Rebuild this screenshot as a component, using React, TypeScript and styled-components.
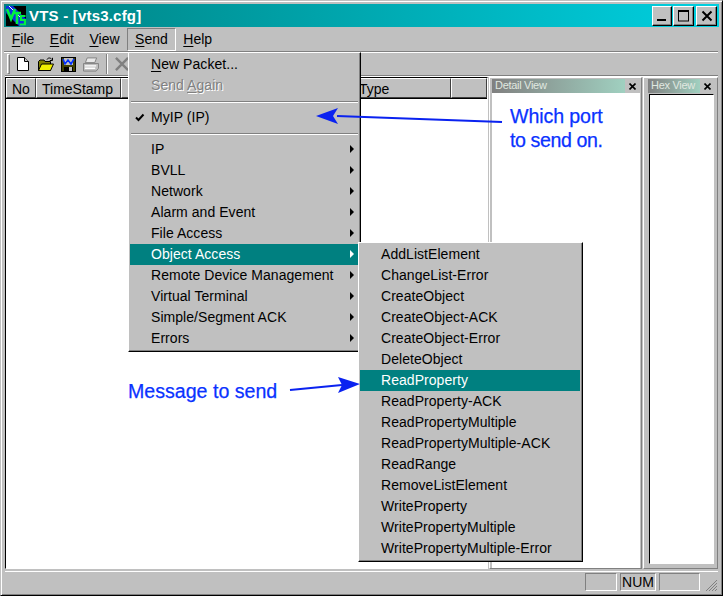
import React from 'react';
import styled, {createGlobalStyle} from 'styled-components';

const Global = createGlobalStyle`
  html, body {
    margin: 0;
    padding: 0;
    background: #c0c0c0;
  }
  * {
    box-sizing: border-box;
  }
`

const Win = styled.div`
  position: relative;
  width: 723px;
  height: 596px;
  padding: 3px 4px 3px;
  display: flex;
  flex-direction: column;
  overflow: hidden;
  background: #c0c0c0;
  border: 1px solid;
  border-color: #c0c0c0 #000 #000 #c0c0c0;
  box-shadow: inset 1px 1px 0 #fff, inset -1px -1px 0 #808080;
  font-family: "Liberation Sans", Arial, sans-serif;
  font-size: 14px;
  color: #000;
`

const TitleBar = styled.div`
  flex: none;
  height: 23px;
  margin: 0 0 0 -1px;
  width: 715px;
  padding: 0 2px 0 2px;
  display: flex;
  align-items: center;
  background: linear-gradient(90deg, #008080 0%, #00d0e0 100%);
`

const TitleText = styled.span`
  margin-left: 3px;
  flex: 1;
  color: #fff;
  font-weight: bold;
  font-size: 15px;
  letter-spacing: 0.2px;
`

const CapButton = styled.button<{ w: number; gap?: number }>`
  width: ${props => props.w}px;
  height: 20px;
  margin-left: ${props => props.gap || 0}px;
  padding: 0;
  display: flex;
  align-items: center;
  justify-content: center;
  background: #c0c0c0;
  border: 1px solid;
  border-color: #fff #000 #000 #fff;
  box-shadow: inset -1px -1px 0 #808080;
`

const MenuBar = styled.div`
  flex: none;
  height: 25px;
  margin-left: -1px;
  display: flex;
  align-items: center;
  border-bottom: 1px solid #808080;
  box-shadow: 0 1px 0 #fff;
`

const MenuTitle = styled.div<{ open?: boolean }>`
  height: 23px;
  padding: 0 6.75px;
  display: flex;
  align-items: center;
  border: 1px solid transparent;
  border-color: ${props => props.open ? '#808080 #fff #fff #808080' : 'transparent'};
`

const Key = styled.span`
  text-decoration: underline;
  text-underline-offset: 2px;
`

const ToolBar = styled.div`
  flex: none;
  height: 24px;
  padding: 1px 0 0 2px;
  display: flex;
  align-items: center;
  gap: 7px;
  border-bottom: 1px solid #808080;
  box-shadow: 0 1px 0 #fff;
`

const Grip = styled.div`
  width: 3px;
  height: 20px;
  border: 1px solid;
  border-color: #fff #808080 #808080 #fff;
`

const ToolIcon = styled.svg<{ after?: number }>`
  flex: none;
  display: block;
  margin-right: ${props => props.after || 0}px;
`

const ToolSep = styled.div`
  width: 2px;
  height: 20px;
  border-left: 1px solid #808080;
  border-right: 1px solid #fff;
`

const Panes = styled.div`
  flex: 1;
  min-height: 0;
  margin-top: 1px;
  display: flex;
`

const ListPane = styled.div`
  width: 484px;
  display: flex;
  flex-direction: column;
  border-top: 1px solid #000;
  border-left: 1px solid #000;
  border-right: 1px solid #fff;
  border-bottom: 1px solid #fff;
  background: #fff;
`

const HeaderRow = styled.div`
  flex: none;
  height: 21px;
  display: flex;
  background: #c0c0c0;
  border-bottom: 1px solid #000;
`

const HeaderCell = styled.div<{ w: number; grow?: boolean }>`
  width: ${props => props.w}px;
  flex: ${props => props.grow ? 1 : 'none'};
  padding: 2px 0 0 5px;
  border: 1px solid;
  border-color: #fff #404040 #404040 #fff;
`

const Splitter = styled.div`
  width: 1px;
  flex: none;
`

const DockPane = styled.div<{ w: number; left: number; right: number }>`
  width: ${props => props.w}px;
  flex: none;
  padding: 1px ${props => props.right}px 0 ${props => props.left}px;
  display: flex;
  flex-direction: column;
  border: 1px solid;
  border-color: #fff #808080 #808080 #fff;
`

const DockHead = styled.div`
  flex: none;
  height: 14px;
  display: flex;
  align-items: center;
  font-size: 11px;
  letter-spacing: -0.3px;
`

const DockTitle = styled.div<{ w: number }>`
  width: ${props => props.w}px;
  height: 14px;
  padding-left: 3px;
  line-height: 13px;
  color: #e0e8e0;
  background: linear-gradient(90deg, #808080 0%, #a0d0c0 100%);
`

const DockClose = styled.span`
  flex: 1;
  display: flex;
  justify-content: center;
  align-items: center;
`

const DetailBody = styled.div`
  flex: 1;
  background: #fff;
`

const HexBody = styled.div`
  flex: 1;
  margin: 1px 0 4px 1px;
  background: #fff;
  border: 1px solid;
  border-color: #000 #fff #fff #000;
`

const StatusBar = styled.div`
  flex: none;
  height: 21px;
  margin-top: 2px;
  display: flex;
  justify-content: flex-end;
  align-items: flex-end;
  gap: 3px;
  padding: 0 18px 1px 0;
  border-top: 1px solid #fff;
  position: relative;
`

const StatusCell = styled.div<{ w: number }>`
  width: ${props => props.w}px;
  height: 18px;
  line-height: 16px;
  text-align: center;
  border: 1px solid;
  border-color: #808080 #fff #fff #808080;
`

const SizeGrip = styled.svg`
  position: absolute;
  right: 0;
  bottom: 0;
`

const PopMenu = styled.div<{ x: number; y: number; w: number }>`
  position: absolute;
  left: ${props => props.x}px;
  top: ${props => props.y}px;
  width: ${props => props.w}px;
  padding: 1px 2px 2px 1px;
  background: #c0c0c0;
  border: 1px solid;
  border-color: #fff #000 #000 #fff;
  box-shadow: inset -1px -1px 0 #808080;
`

const Item = styled.div<{ active?: boolean; off?: boolean }>`
  position: relative;
  height: 21px;
  line-height: 20px;
  padding-left: 21px;
  white-space: nowrap;
  letter-spacing: 0.05px;
  color: ${props => props.active ? '#fff' : props.off ? '#808080' : '#000'};
  background: ${props => props.active ? '#008080' : 'transparent'};
  text-shadow: ${props => props.off ? '1px 1px 0 #fff' : 'none'};
`

const Chevron = styled.i<{ active?: boolean }>`
  position: absolute;
  right: 4px;
  top: 6px;
  border-left: 4px solid ${props => props.active ? '#fff' : '#000'};
  border-top: 4px solid transparent;
  border-bottom: 4px solid transparent;
`

const Tick = styled.svg`
  position: absolute;
  left: 5px;
  top: 6px;
`

const MenuSep = styled.div`
  height: 2px;
  margin: 5px 0 4px 1px;
  border-top: 1px solid #808080;
  border-bottom: 1px solid #fff;
`

const Note = styled.div<{ x: number; y: number; tight?: number }>`
  position: absolute;
  left: ${props => props.x}px;
  top: ${props => props.y}px;
  font-size: 19.6px;
  line-height: 25px;
  letter-spacing: ${props => props.tight || 0}px;
  color: #0a32ff;
  -webkit-text-stroke: 0.25px #0a32ff;
  white-space: nowrap;
`

const Arrows = styled.svg`
  position: absolute;
  left: -1px;
  top: -1px;
  pointer-events: none;
`

const sendGroups = ['IP', 'BVLL', 'Network', 'Alarm and Event', 'File Access', 'Object Access',
    'Remote Device Management', 'Virtual Terminal', 'Simple/Segment ACK', 'Errors']

const objectItems = ['AddListElement', 'ChangeList-Error', 'CreateObject', 'CreateObject-ACK',
    'CreateObject-Error', 'DeleteObject', 'ReadProperty', 'ReadProperty-ACK', 'ReadPropertyMultiple',
    'ReadPropertyMultiple-ACK', 'ReadRange', 'RemoveListElement', 'WriteProperty',
    'WritePropertyMultiple', 'WritePropertyMultiple-Error']

const AppIcon = () => (
    <ToolIcon width="20" height="20" viewBox="0 0 20 20">
        <rect width="20" height="20" fill="#000"/>
        <path d="M0 0 H7 L20 13 V20 H13 L0 7Z" fill="#1030e0"/>
        <path d="M3 0 L20 17" stroke="#fff" strokeWidth="1"/>
        <path d="M1 3 L5 13 L9 3" fill="none" stroke="#00f040" strokeWidth="2.6"/>
        <path d="M7 7 H15 M11 7 V18" fill="none" stroke="#00f040" strokeWidth="2.6"/>
        <path d="M19.5 10 H15 V14 H19 V18.5 H13.5" fill="none" stroke="#00f040" strokeWidth="2.2"/>
    </ToolIcon>
)

const NewIcon = () => (
    <ToolIcon width="12" height="14" viewBox="0 0 12 14" after={2}>
        <path d="M.5.5 H7.5 L11.5 4.5 V13.5 H.5Z" fill="#fff" stroke="#000"/>
        <path d="M7.5.5 V4.5 H11.5" fill="#c0c0c0" stroke="#000"/>
    </ToolIcon>
)

const OpenIcon = () => (
    <ToolIcon width="16" height="14" viewBox="0 0 16 14">
        <path d="M.5 4.5 L2 3 H6 L7 4.5 H12.5 V13.5 H.5Z" fill="#808000" stroke="#000"/>
        <path d="M.5 13.5 L3.5 7 H15.5 L12.5 13.5Z" fill="#f0f000" stroke="#000"/>
        <path d="M9 2.5 C10 .5 12.5 .5 14 2.5 M14.5 .8 V3.5 H11.8" fill="none" stroke="#000"/>
    </ToolIcon>
)

const SaveIcon = () => (
    <ToolIcon width="15" height="15" viewBox="0 0 15 15">
        <rect x=".5" y=".5" width="14" height="14" fill="#404000" stroke="#000"/>
        <rect x="3" y="1" width="9" height="7" fill="#c0c0c0"/>
        <path d="M2 2 L4 7 L7 3 L10 7 L13 2" fill="none" stroke="#0030ff" strokeWidth="1.6"/>
        <rect x="3" y="10" width="9" height="4" fill="#000"/>
        <rect x="8" y="10" width="3" height="4" fill="#c0c0c0"/>
    </ToolIcon>
)

const PrintIcon = () => (
    <ToolIcon width="16" height="15" viewBox="0 0 17 15">
        <path d="M4.5.5 H14.5 L12.5 5.5 H2.5Z" fill="#e8e8e8" stroke="#808080"/>
        <path d="M.5 6.5 H16.5 V11.5 L14 14.5 H.5Z" fill="#c0c0c0" stroke="#808080"/>
        <path d="M2 9 H14 M2 11.5 H13" stroke="#fff" strokeWidth="1.5"/>
    </ToolIcon>
)

const CutIcon = () => (
    <ToolIcon width="14" height="14" viewBox="0 0 15 15">
        <path d="M1 1 L14 14 M14 1 L1 14" stroke="#808080" strokeWidth="2.6"/>
    </ToolIcon>
)

const MiniX = () => (
    <svg width="7" height="7" viewBox="0 0 7 7">
        <path d="M.5 .5 L6.5 6.5 M6.5 .5 L.5 6.5" stroke="#000" strokeWidth="1.6"/>
    </svg>
)

const App = () => {
    return (
        <Win>
            <Global/>
            <TitleBar>
                <AppIcon/>
                <TitleText>VTS - [vts3.cfg]</TitleText>
                <CapButton w={20}>
                    <svg width="12" height="12" viewBox="0 0 12 12"><rect x="1" y="9" width="9" height="2"/></svg>
                </CapButton>
                <CapButton w={21} gap={1}>
                    <svg width="12" height="12" viewBox="0 0 12 12">
                        <rect x=".5" y="1" width="10" height="10" fill="none" stroke="#000"/>
                        <rect x="0" y="0" width="11" height="2"/>
                    </svg>
                </CapButton>
                <CapButton w={21} gap={2}>
                    <svg width="12" height="12" viewBox="0 0 12 12">
                        <path d="M1.5 1.5 L10.5 10.5 M10.5 1.5 L1.5 10.5" stroke="#000" strokeWidth="2"/>
                    </svg>
                </CapButton>
            </TitleBar>
            <MenuBar>
                <MenuTitle><span><Key>F</Key>ile</span></MenuTitle>
                <MenuTitle><span><Key>E</Key>dit</span></MenuTitle>
                <MenuTitle><span><Key>V</Key>iew</span></MenuTitle>
                <MenuTitle open><span><Key>S</Key>end</span></MenuTitle>
                <MenuTitle><span><Key>H</Key>elp</span></MenuTitle>
            </MenuBar>
            <ToolBar>
                <Grip/>
                <NewIcon/>
                <OpenIcon/>
                <SaveIcon/>
                <PrintIcon/>
                <ToolSep/>
                <CutIcon/>
            </ToolBar>
            <Panes>
                <ListPane>
                    <HeaderRow>
                        <HeaderCell w={30}>No</HeaderCell>
                        <HeaderCell w={85}>TimeStamp</HeaderCell>
                        <HeaderCell w={232}/>
                        <HeaderCell w={98}>Type</HeaderCell>
                        <HeaderCell w={36} grow/>
                    </HeaderRow>
                </ListPane>
                <Splitter/>
                <DockPane w={153} left={2} right={1}>
                    <DockHead>
                        <DockTitle w={133}>Detail View</DockTitle>
                        <DockClose><MiniX/></DockClose>
                    </DockHead>
                    <DetailBody/>
                </DockPane>
                <Splitter/>
                <DockPane w={75} left={4} right={3}>
                    <DockHead>
                        <DockTitle w={52}>Hex View</DockTitle>
                        <DockClose><MiniX/></DockClose>
                    </DockHead>
                    <HexBody/>
                </DockPane>
            </Panes>
            <StatusBar>
                <StatusCell w={32}/>
                <StatusCell w={36}>NUM</StatusCell>
                <StatusCell w={41}/>
                <SizeGrip width="14" height="14" viewBox="0 0 14 14">
                    <path d="M13 2 L2 13 M13 5 L5 13 M13 8 L8 13 M13 11 L11 13" stroke="#808080"/>
                </SizeGrip>
            </StatusBar>

            <PopMenu x={127} y={51} w={233}>
                <Item><Key>N</Key>ew Packet...</Item>
                <Item off>Send <Key>A</Key>gain</Item>
                <MenuSep/>
                <Item>
                    <Tick width="10" height="9" viewBox="0 0 10 9">
                        <path d="M1 4.5 L3.5 7 L8.5 1.5" fill="none" stroke="#000" strokeWidth="2"/>
                    </Tick>
                    MyIP (IP)
                </Item>
                <MenuSep/>
                {sendGroups.map(g => (
                    <Item key={g} active={g === 'Object Access'}>
                        {g}
                        <Chevron active={g === 'Object Access'}/>
                    </Item>
                ))}
            </PopMenu>

            <PopMenu x={357} y={241} w={225}>
                {objectItems.map(m => (
                    <Item key={m} active={m === 'ReadProperty'}>{m}</Item>
                ))}
            </PopMenu>

            <Arrows width="723" height="596" viewBox="0 0 723 596">
                <path d="M337 116 L502 122" stroke="#0a22f0" strokeWidth="2" fill="none"/>
                <path d="M316 116 L338 108 L333 116 L338 124Z" fill="#0a22f0"/>
                <path d="M290 390 L342 385" stroke="#0a22f0" strokeWidth="2" fill="none"/>
                <path d="M360 384 L338 377 L342 385 L338 393Z" fill="#0a22f0"/>
            </Arrows>
            <Note x={509} y={103} tight={-0.1}>Which port</Note>
            <Note x={509} y={127} tight={-0.4}>to send on.</Note>
            <Note x={127} y={378}>Message to send</Note>
        </Win>
    )
}

export default App
